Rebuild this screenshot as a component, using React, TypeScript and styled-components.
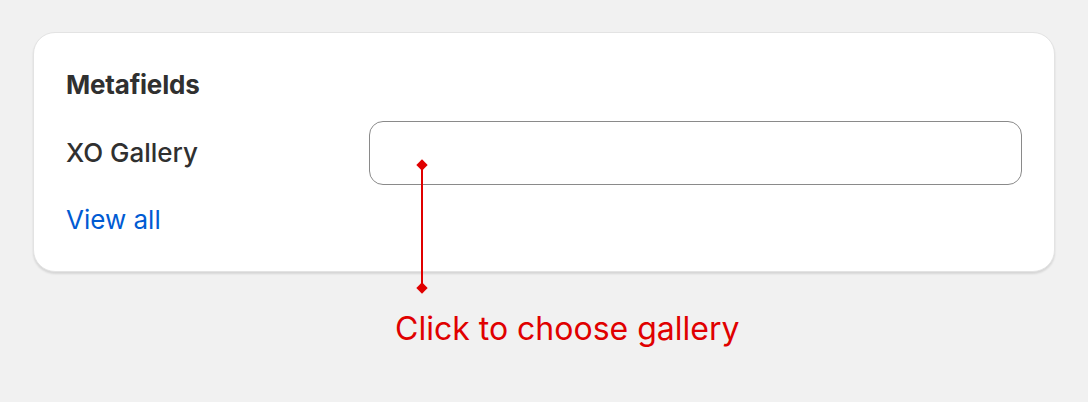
import React from 'react';
import styled, { createGlobalStyle } from 'styled-components';

const GlobalStyle = createGlobalStyle`
    html, body {
        margin: 0;
        padding: 0;
        background: #f1f1f1;
    }
    body {
        font-family: Inter, "Noto Sans", sans-serif;
        color: #303030;
    }
`

export default function App() {
    return (
        <Page>
            <GlobalStyle />
            <Card>
                <Heading>Metafields</Heading>
                <FieldRow>
                    <Label>XO Gallery</Label>
                    <FieldInput aria-label="XO Gallery" />
                </FieldRow>
                <ViewAll href="#">View all</ViewAll>
            </Card>

            <Annotation>
                <Pointer />
                <Note>Click to choose gallery</Note>
            </Annotation>
        </Page>
    )
}

const Page = styled.div`
    position: relative;
    width: 1088px;
    height: 402px;
    padding: 32px 33px;
    box-sizing: border-box;
`

const Card = styled.div`
    background: #fff;
    border: 1px solid #e3e3e3;
    border-radius: 22px;
    padding: 32px 32px 31px;
    box-shadow: 0 2px 2px rgba(26, 26, 26, .12);
    display: flex;
    flex-direction: column;
    gap: 16px;
`

const Heading = styled.h2`
    margin: 0;
    font-size: 26px;
    line-height: 40px;
    font-weight: 650;
    letter-spacing: -0.2px;
    color: #303030;
`

const FieldRow = styled.div`
    display: grid;
    grid-template-columns: 303px 1fr;
    align-items: center;
`

const Label = styled.span`
    font-size: 26px;
    line-height: 40px;
    font-weight: 450;
    color: #303030;
`

const FieldInput = styled.input`
    height: 64px;
    box-sizing: border-box;
    border: 1px solid #8a8a8a;
    border-radius: 14px;
    background: #fff;
    outline: 0;
    padding: 0 24px;
    font: inherit;
`

const ViewAll = styled.a`
    font-size: 26px;
    line-height: 40px;
    color: #005bd3;
    text-decoration: none;
    align-self: flex-start;
    margin-top: -1px;
`

const Annotation = styled.div`
    position: absolute;
    left: 395px;
    top: 165px;
    display: flex;
    flex-direction: column;
    align-items: flex-start;
`

const Pointer = styled.div`
    position: relative;
    margin-left: 26px;
    width: 2px;
    height: 123px;
    background: #e00000;

    &::before, &::after {
        content: '';
        position: absolute;
        left: -3px;
        width: 8px;
        height: 8px;
        background: #e00000;
        transform: rotate(45deg);
    }
    &::before { top: -4px; }
    &::after { bottom: -4px; }
`

const Note = styled.div`
    margin-top: 21px;
    font-size: 32px;
    line-height: 40px;
    color: #e00000;
    white-space: nowrap;
`
